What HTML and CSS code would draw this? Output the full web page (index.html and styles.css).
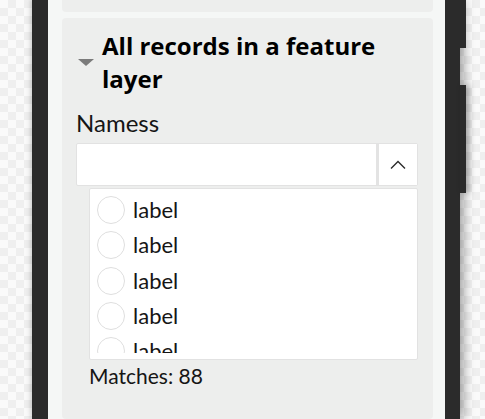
FILE: index.html
```html
<!DOCTYPE html>
<html lang="en">
<head>
    <meta charset="UTF-8">
    <meta name="viewport" content="width=device-width, initial-scale=1.0">
    <title>Feature layer filter</title>
    <link rel="stylesheet" href="styles.css">
</head>
<body>

    <div class="phone">
        <span class="side-btn side-btn-top"></span>
        <span class="side-btn side-btn-mid"></span>

        <div class="screen">
            <section class="card card-prev"></section>

            <section class="card card-main">
                <header class="card-head">
                    <span class="caret"></span>
                    <h2 class="card-title">All records in a feature layer</h2>
                </header>

                <label class="field-label" for="names">Namess</label>
                <div class="combo">
                    <input id="names" class="combo-input" type="text">
                    <button class="combo-btn" type="button" aria-label="Collapse">
                        <svg width="16" height="9" viewBox="0 0 16 9">
                            <path d="M1 8.5 L8 1.5 L15 8.5" fill="none" stroke="#2b2b2b" stroke-width="1.4"/>
                        </svg>
                    </button>
                </div>

                <div class="list">
                    <div class="list-scroll">
                        <div class="row"><span class="radio"></span><span class="row-label">label</span></div>
                        <div class="row"><span class="radio"></span><span class="row-label">label</span></div>
                        <div class="row"><span class="radio"></span><span class="row-label">label</span></div>
                        <div class="row"><span class="radio"></span><span class="row-label">label</span></div>
                        <div class="row"><span class="radio"></span><span class="row-label">label</span></div>
                    </div>
                </div>

                <p class="matches">Matches: 88</p>
            </section>
        </div>
    </div>

</body>
</html>
```

FILE: styles.css
```css
html, body {
    height: 100%;
}
body {
    margin: 0;
    overflow: hidden;
    font-family: 'Lato', sans-serif;
    color: #151515;
    background-color: #f9f9f9;
    background-image: repeating-conic-gradient(#efefef 0 25%, #fafafa 0 50%);
    background-size: 16px 16px;
}
.phone {
    position: relative;
    margin-left: 32px;
    width: 397px;
    height: 100%;
    border-left: 16px solid #2b2b2b;
    border-right: 15px solid #2b2b2b;
    box-shadow: 4px 0 10px rgba(0, 0, 0, 0.35), -2px 0 3px rgba(0, 0, 0, 0.08);
}
.side-btn {
    position: absolute;
    right: -21px;
    width: 6px;
    background-color: #2b2b2b;
}
.side-btn-top {
    top: 0;
    height: 48px;
}
.side-btn-mid {
    top: 85px;
    height: 108px;
    box-shadow: 3px 0 6px rgba(0, 0, 0, 0.3);
}
.screen {
    height: 100%;
    box-sizing: border-box;
    display: flex;
    flex-direction: column;
    padding: 0 12px 0 14px;
    background-color: #f5f7f6;
}
.card {
    background-color: #edeeed;
    border-radius: 4px;
}
.card-prev {
    flex: none;
    height: 12px;
    border-radius: 0 0 4px 4px;
    margin-bottom: 6px;
}
.card-main {
    flex: 1;
    min-height: 0;
    overflow: hidden;
    padding: 11px 15px 0 14px;
}
.card-head {
    display: flex;
    align-items: center;
}
.caret {
    flex: none;
    width: 0;
    height: 0;
    margin-left: 2px;
    margin-right: 8px;
    border-left: 8px solid transparent;
    border-right: 8px solid transparent;
    border-top: 7px solid #7b7b7b;
}
.card-title {
    margin: 0;
    font-family: 'Open Sans', sans-serif;
    font-size: 24px;
    font-weight: 700;
    line-height: 33px;
    color: #000;
}
.field-label {
    display: block;
    margin-top: 14px;
    font-size: 24px;
    line-height: 28px;
}
.combo {
    display: flex;
    height: 43px;
    margin-top: 6px;
    box-sizing: border-box;
    border: 1px solid #e2e2e2;
    border-radius: 2px;
    background-color: #fff;
}
.combo-input {
    flex: 1;
    min-width: 0;
    border: none;
    outline: none;
    background: transparent;
    font-family: inherit;
    font-size: 18px;
}
.combo-btn {
    flex: none;
    width: 41px;
    border: none;
    border-left: 3px solid #e3e3e3;
    background: #fff;
    padding: 0;
    display: flex;
    align-items: center;
    justify-content: center;
    cursor: pointer;
}
.list {
    margin: 2px 0 0 13px;
    padding: 7px 0 6px 7px;
    border: 1px solid #e2e2e2;
    border-radius: 2px;
    background-color: #fff;
}
.list-scroll {
    height: 157px;
    overflow: hidden;
}
.row {
    display: flex;
    align-items: center;
    height: 28px;
    margin-bottom: 7.33px;
}
.radio {
    flex: none;
    width: 28px;
    height: 28px;
    box-sizing: border-box;
    border: 1.5px solid #dedede;
    border-radius: 50%;
    margin-right: 8px;
}
.row-label {
    font-size: 22px;
    line-height: 28px;
}
.matches {
    margin: 2px 0 0 13px;
    font-size: 21px;
    line-height: 28px;
}
```
